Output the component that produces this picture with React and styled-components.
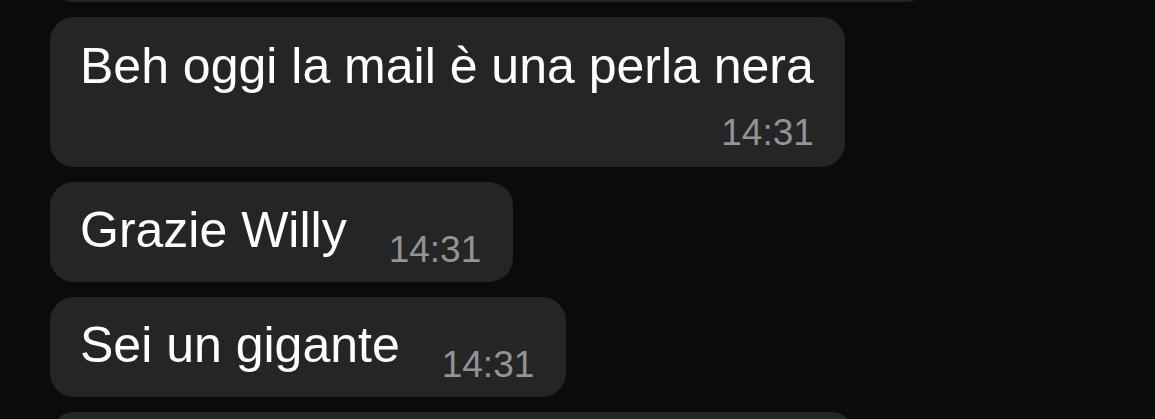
import React from 'react';
import styled, { createGlobalStyle } from 'styled-components';

const GlobalStyle = createGlobalStyle`
  html, body {
    margin: 0;
    padding: 0;
    background: #0b0b0b;
    overflow: hidden;
  }

  body {
    font-family: 'Liberation Sans', Arial, sans-serif;
    -webkit-font-smoothing: antialiased;
  }
`;

const Thread = styled.div`
  display: flex;
  flex-direction: column;
  align-items: flex-start;
  gap: 15px;
  height: 419px;
  padding-left: 50px;
  overflow: hidden;
`;

const Bubble = styled.div`
  display: flex;
  flex-direction: ${(p) => (p.$stacked ? 'column' : 'row')};
  align-items: flex-end;
  flex-shrink: 0;
  box-sizing: border-box;
  background: #242525;
  border-radius: 24px;
  padding: ${(p) => (p.$stacked ? '19px 31px 12px 30px' : '18px 32px 10px 30px')};
  color: #ffffff;
`;

// bubbles cut off by the top and bottom edges of the scroll view
const EdgeBubble = styled.div`
  flex-shrink: 0;
  width: ${(p) => p.$width}px;
  height: 100px;
  margin-top: ${(p) => (p.$top ? '-98px' : '0')};
  background: #242525;
  border-radius: 24px;
`;

const Text = styled.span`
  font-size: 50px;
  line-height: 60px;
  white-space: nowrap;
  margin-bottom: ${(p) => (p.$stacked ? '15px' : '12px')};
  align-self: flex-start;
`;

const Time = styled.span`
  font-size: 37px;
  line-height: 44px;
  color: #939395;
  white-space: nowrap;
  margin-left: ${(p) => (p.$stacked ? '0' : '42px')};
`;

const messages = [
  { text: 'Beh oggi la mail è una perla nera', time: '14:31', stacked: true },
  { text: 'Grazie Willy', time: '14:31' },
  { text: 'Sei un gigante', time: '14:31' },
];

export default function App() {
  return (
    <>
      <GlobalStyle />
      <Thread>
        <EdgeBubble $top $width={880} />
        {messages.map((m, i) => (
          <Bubble key={i} $stacked={m.stacked}>
            <Text $stacked={m.stacked}>{m.text}</Text>
            <Time $stacked={m.stacked}>{m.time}</Time>
          </Bubble>
        ))}
        <EdgeBubble $width={805} />
      </Thread>
    </>
  );
}
